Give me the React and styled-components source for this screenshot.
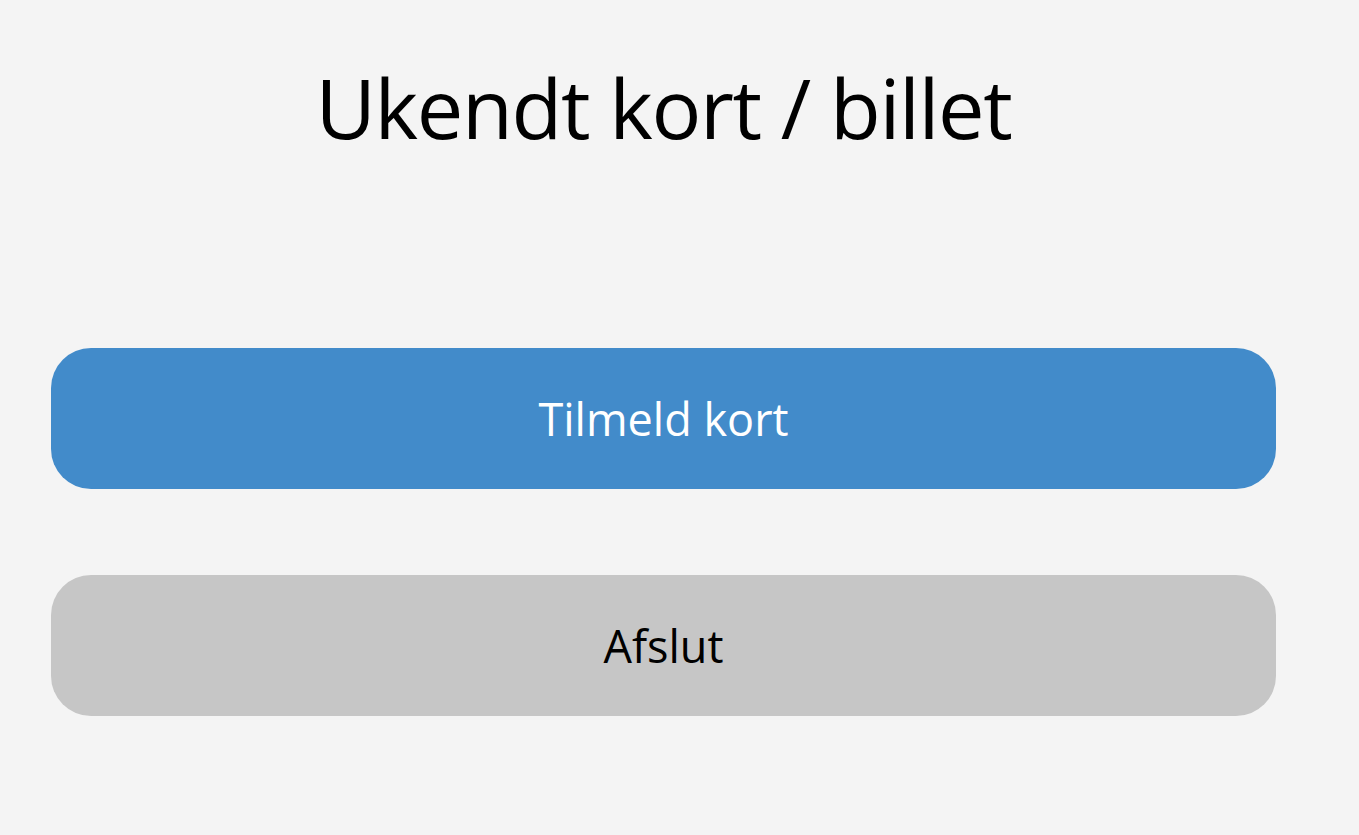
import styled, { createGlobalStyle } from 'styled-components';

const GlobalStyle = createGlobalStyle`
  html, body {
    margin: 0;
    padding: 0;
    background: #f4f4f4;
  }
  body {
    font-family: "Open Sans", "Noto Sans", sans-serif;
  }
`;

const Page = styled.div`
  min-height: 835px;
  box-sizing: border-box;
  padding: 47px 83px 0 51px;
  display: flex;
  flex-direction: column;
`;

const Title = styled.h1`
  margin: 0;
  font-size: 83px;
  font-weight: 400;
  letter-spacing: -1.4px;
  line-height: 120px;
  text-align: center;
  color: #000;
`;

const Buttons = styled.div`
  margin-top: 181px;
  display: flex;
  flex-direction: column;
  gap: 86px;
`;

const Button = styled.button`
  height: 141px;
  width: 100%;
  border: none;
  border-radius: 40px;
  font-family: inherit;
  font-size: 45px;
  color: ${props => props.primary ? '#fff' : '#000'};
  background-color: ${props => props.primary ? '#428bca' : '#c6c6c6'};
  cursor: pointer;
`;

function App(){
    return(
        <>
            <GlobalStyle />
            <Page>
                <Title>Ukendt kort / billet</Title>
                <Buttons>
                    <Button primary>Tilmeld kort</Button>
                    <Button>Afslut</Button>
                </Buttons>
            </Page>
        </>
    )
}

export default App;
